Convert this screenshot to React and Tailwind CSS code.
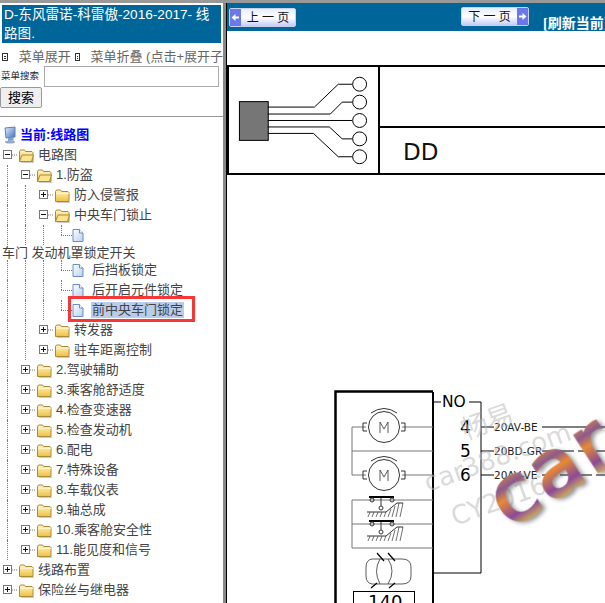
const Box = ({ open }) => (
  <svg width="18" height="20" viewBox="0 0 18 20" className="block shrink-0">
    <path d="M12 10H18" stroke="#777" strokeDasharray="1 1" />
    <rect x="3.5" y="5.5" width="8" height="8" fill="#fff" stroke="#777" />
    <path d="M5 9.5h5" stroke="#111" />
    {!open && <path d="M7.5 7v5" stroke="#111" />}
  </svg>
);

const Folder = ({ open }) => (
  <svg width="16" height="20" viewBox="0 0 16 20" className="block shrink-0">
    <defs>
      <linearGradient id="fg" x1="0" y1="0" x2="0" y2="1">
        <stop offset="0" stopColor="#fff6c8" />
        <stop offset="1" stopColor="#f0c040" />
      </linearGradient>
    </defs>
    <path d="M1.5 16.5V6.5l1-1.5h4l1 1.5h6.5l1 1v9z" fill="url(#fg)" stroke="#a88a3a" strokeWidth="1" />
    {open && <path d="M1.5 16.5l2.5-6.5h11.5l-2 6.5z" fill="#fbe48c" stroke="#a88a3a" strokeWidth="1" />}
    {!open && <path d="M2 8.5h13" stroke="#fff3c0" />}
    <path d="M3 17.5h13" stroke="#ccc" />
  </svg>
);

const Doc = () => (
  <svg width="12" height="20" viewBox="0 0 12 20" className="block shrink-0">
    <defs>
      <linearGradient id="dg" x1="0" y1="0" x2="1" y2="1">
        <stop offset="0" stopColor="#fff" />
        <stop offset="1" stopColor="#b8d0f0" />
      </linearGradient>
    </defs>
    <path d="M1 4.5h6.5l3.5 3.5v8.500H1z" fill="url(#dg)" stroke="#6c8cc0" />
    <path d="M7.500 4.500V8H11" fill="#fff" stroke="#6c8cc0" />
  </svg>
);

const Guides = ({ g }) =>
  g.map((on, i) => (
    <div key={i} className="w-[18px] h-full shrink-0">
      {on && <div className="ml-[7px] h-full border-l border-dotted border-[#777]" />}
    </div>
  ));

const Row = ({ g, open, label }) => (
  <div className="flex h-5 items-center">
    <Guides g={g} />
    <Box open={open} />
    <Folder open={open} />
    <span className="ml-1 whitespace-nowrap">{label}</span>
  </div>
);

const File = ({ label, active }) => (
  <div className="relative flex h-5 items-center">
    <Guides g={[true, true, true]} />
    <div className="w-[18px] h-full shrink-0 relative">
      <div className="ml-[7px] h-1/2 border-l border-dotted border-[#777]" />
      <div className="ml-[7px] mt-0 w-[11px] border-t border-dotted border-[#777]" />
    </div>
    <Doc />
    {label && (
      <span className={`ml-[7px] whitespace-nowrap px-px leading-4 ${active ? "bg-[#b9cdea]" : ""}`}>{label}</span>
    )}
    {active && <div className="absolute left-[68px] top-[-4px] w-[127px] h-[26px] border-[3px] border-[#f63737]" />}
  </div>
);

const Computer = () => (
  <svg width="15" height="18" viewBox="0 0 15 18" className="block shrink-0">
    <defs>
      <linearGradient id="cg" x1="0" y1="0" x2="1" y2="1">
        <stop offset="0" stopColor="#e8f0ff" />
        <stop offset="1" stopColor="#3f6fc0" />
      </linearGradient>
    </defs>
    <path d="M2 2l10-1v10l-9 1z" fill="url(#cg)" stroke="#5f7fb0" />
    <path d="M5 12l5-.5 1 3-6 .5z" fill="#7aa0d8" />
    <ellipse cx="7" cy="16" rx="5" ry="1.500" fill="#9ab" />
  </svg>
);

const PageBtn = ({ dir, w }) => (
  <div className={`flex h-[19px] ${w} items-center rounded-[2px] border border-[#c8d0f0] bg-gradient-to-b from-[#e8ecff] via-white to-[#c4ccf4] text-[12px] text-[#111] ${dir === "next" ? "flex-row-reverse" : ""}`}>
    <div className="flex h-full w-[11px] items-center justify-center bg-[#6a78e8]">
      <svg width="9" height="9" viewBox="0 0 9 9" className="block">
        <path d={dir === "next" ? "M1 3.500H4.500V1L8.500 4.500L4.500 8V5.500H1z" : "M8 3.500H4.500V1L.5 4.500L4.500 8V5.500H8z"} fill="#fff" />
      </svg>
    </div>
    <span className="flex-1 text-center leading-none whitespace-pre">{dir === "next" ? "下 一 页" : "上 一 页"}</span>
  </div>
);

const Diagram = () => (
  <svg width="378" height="428" viewBox="227 175 378 428" className="block" fontFamily="'DejaVu Sans',sans-serif">
    <defs>
      <linearGradient id="car" x1="0" y1="1" x2="0" y2="0">
        <stop offset=".12" stopColor="#e8d040" />
        <stop offset=".3" stopColor="#8a4a98" />
        <stop offset=".5" stopColor="#e88a34" />
        <stop offset=".62" stopColor="#8a5a90" />
        <stop offset=".78" stopColor="#e88a34" />
        <stop offset="1" stopColor="#8a8a98" />
      </linearGradient>
      <filter id="sh" x="-20%" y="-20%" width="140%" height="140%">
        <feGaussianBlur stdDeviation="2" />
      </filter>
      <filter id="soft" x="-5%" y="-5%" width="110%" height="110%">
        <feGaussianBlur stdDeviation=".7" />
      </filter>
    </defs>
    <g fill="none" stroke="#000">
      <path d="M335.500 603V391.500H433" strokeWidth="2.500" />
      <path d="M433 603V392" strokeWidth="2" />
      <path d="M433 402H441M469 402H481V573H433" strokeWidth="1" />
      <path d="M481 427H494M542 427H605" />
      <path d="M481 451H494M542 451H605" strokeDasharray="14 4" />
      <path d="M481 475H494M542 475H605" strokeDasharray="14 4" />
    </g>
    <g fill="none" stroke="#777">
      <path d="M433 427H402M366 427H352V475H366M402 475H433M352 451H433" />
      <path d="M433 500H352V548H433M352 524H433" />
    </g>
    <g fill="none" stroke="#333">
      <circle cx="384" cy="427" r="15.500" />
      <circle cx="384" cy="475" r="15.500" />
      <path d="M367 423h-4v8h4M401 423h4v8h-4M367 471h-4v8h4M401 471h4v8h-4" />
      <path d="M371 413q13-9 26 0M371 461q13-9 26 0" />
      <path d="M380 433v-11l4 7 4-7v11M380 481v-11l4 7 4-7v11" strokeWidth=".8" />
    </g>
    <g fill="none" stroke="#333">
      <path d="M369 497H394M369 521H394" stroke="#000" strokeWidth="2" />
      <path d="M381 498v8M381 522v8" />
      <circle cx="372" cy="500" r="2" /><circle cx="392" cy="500" r="2" />
      <circle cx="372" cy="524" r="2" /><circle cx="392" cy="524" r="2" />
      <circle cx="381" cy="508" r="2" /><circle cx="381" cy="532" r="2" />
      <path d="M367 512H386L397 503H403M367 536H386L397 527H403" />
      <path d="M368 517l2-5M372 517l2-5M376 517l2-5M380 517l2-5M384 517l2-5M388 517l3-8M392 517l3-11M396 517l3-14M400 517l3-14M368 541l2-5M372 541l2-5M376 541l2-5M380 541l2-5M384 541l2-5M388 541l3-8M392 541l3-11M396 541l3-14M400 541l3-14" strokeWidth=".7" />
    </g>
    <g fill="none" stroke="#333">
      <path d="M372 559h30q9 0 9 8v9q0 8-9 8h-30q-6-1-6-8v-9q0-7 6-8z" strokeWidth=".8" />
      <path d="M380 559q-7 12 0 25M388 559q8 12 0 25" strokeWidth=".8" />
      <path d="M377 553l7 8M388 553l7 8M377 583l-6 5M395 583l-6 5" stroke="#000" strokeWidth="1.200" />
      <rect x="353.500" y="591.500" width="61" height="30" stroke="#000" />
    </g>
    <text x="368" y="608" fontSize="18" fill="#000">140</text>
    <text x="442" y="407" fontSize="15.500" fill="#000">NO</text>
    <text x="460" y="433" fontSize="17" fill="#000">4</text>
    <text x="460" y="457" fontSize="17" fill="#000">5</text>
    <text x="460" y="481" fontSize="17" fill="#000">6</text>
    <text x="494" y="431" fontSize="10.500" fill="#222">20AV-BE</text>
    <text x="494" y="455" fontSize="10.500" fill="#222">20BD-GR</text>
    <text x="494" y="479" fontSize="10.500" fill="#222">20AV-VE</text>
    <g fill="#bbb" fillOpacity=".55">
      <text x="465" y="440" fontSize="27" transform="rotate(-20 465 440)" fontFamily="'Noto Sans CJK SC',sans-serif">畅易</text>
      <text x="428" y="492" fontSize="26" transform="rotate(-20 428 492)">car388.com</text>
      <text x="455" y="526" fontSize="26" transform="rotate(-20 455 526)">CY2016</text>
    </g>
    <g transform="rotate(-33 516 500)" fontSize="78" letterSpacing="4">
      <text x="497" y="524" fill="#555" fillOpacity=".55" stroke="#555" strokeOpacity=".5" strokeWidth="3" filter="url(#sh)">car</text>
      <text x="495" y="521" fill="url(#car)" stroke="url(#car)" strokeWidth="3" filter="url(#soft)">car</text>
    </g>
  </svg>
);

export default function App() {
  return (
    <div className="flex h-[603px] w-[605px] overflow-hidden bg-[#999] pt-[3px] [font-family:'Liberation_Sans','Noto_Sans_CJK_SC',sans-serif]">
      <aside className="h-[600px] w-[223px] shrink-0 overflow-hidden bg-white">
        <div className="mx-[2px] mt-[2px] h-[38px] bg-[#006699] px-[2px] text-[13.600px] leading-[19px] text-white">
          D-东风雷诺-科雷傲-2016-2017- 线路图.
        </div>
        <div className="mt-[5px] flex h-[18px] items-center whitespace-nowrap text-[13px] text-[#666]">
          <span className="ml-[2px] mr-[11px] flex h-[8px] w-[8px] flex-col justify-center gap-px border border-[#333] px-px"><i className="block h-px bg-[#333]" /><i className="block h-px bg-[#333]" /></span>
          <span>菜单展开</span>
          <span className="ml-1 mr-[10px] flex h-[8px] w-[8px] flex-col justify-center gap-px border border-[#333] px-px"><i className="block h-px bg-[#333]" /><i className="block h-px bg-[#333]" /></span>
          <span>菜单折叠 (点击+展开子</span>
        </div>
        <div className="flex h-[21px] items-center">
          <span className="ml-px w-[43px] text-[9.500px] text-[#222]">菜单搜索</span>
          <div className="h-[21px] w-[175px] border border-[#aaa] bg-white" />
        </div>
        <div className="flex h-[21px] w-[42px] items-center justify-center rounded-[2px] border border-[#999] bg-[#efefef] text-[13px] text-black">搜索</div>
        <div className="mt-[8px] border-t border-[#999]" />
        <div className="h-[8px]" />
        <div className="flex h-5 items-center pl-[3px] text-[13px] font-bold text-[#0000ff]">
          <Computer />
          <span className="ml-[2px]">当前:线路图</span>
        </div>
        <div className="text-[13px] text-[#444]">
          <Row g={[]} open label="电路图" />
          <Row g={[true]} open label="1.防盗" />
          <Row g={[true, true]} label="防入侵警报" />
          <Row g={[true, true]} open label="中央车门锁止" />
          <File />
          <div className="flex h-[15px] items-center whitespace-nowrap pl-[2px]">车门 发动机罩锁定开关</div>
          <File label="后挡板锁定" />
          <File label="后开启元件锁定" />
          <File label="前中央车门锁定" active />
          <Row g={[true, true]} label="转发器" />
          <Row g={[true, true]} label="驻车距离控制" />
          <Row g={[true]} label="2.驾驶辅助" />
          <Row g={[true]} label="3.乘客舱舒适度" />
          <Row g={[true]} label="4.检查变速器" />
          <Row g={[true]} label="5.检查发动机" />
          <Row g={[true]} label="6.配电" />
          <Row g={[true]} label="7.特殊设备" />
          <Row g={[true]} label="8.车载仪表" />
          <Row g={[true]} label="9.轴总成" />
          <Row g={[true]} label="10.乘客舱安全性" />
          <Row g={[true]} label="11.能见度和信号" />
          <Row g={[]} label="线路布置" />
          <Row g={[]} label="保险丝与继电器" />
        </div>
      </aside>
      <div className="w-[3px] shrink-0 bg-[#888]" />
      <div className="w-px shrink-0 bg-black" />
      <main className="min-w-0 flex-1 overflow-hidden bg-white">
        <div className="flex h-[28px] bg-[#006699]">
          <div className="ml-[2px] mt-[5px]"><PageBtn dir="prev" w="w-[67px]" /></div>
          <div className="ml-[165px] mt-[4px]"><PageBtn dir="next" w="w-[68px]" /></div>
          <div className="ml-[14px] mt-[10px] whitespace-nowrap text-[14px] font-bold text-white [font-family:'Liberation_Serif','Noto_Sans_CJK_SC',serif]">[刷新当前页]</div>
        </div>
        <div className="mt-[34px] flex h-[110px] w-[378px] border-y-2 border-l-2 border-black">
          <div className="flex w-[151px] shrink-0 items-center border-r-2 border-black">
            <svg width="150" height="106" viewBox="229 67 150 106" className="block">
              <rect x="239.500" y="101.500" width="29" height="39" fill="#767676" stroke="#000" />
              <g fill="none" stroke="#000" strokeWidth="1">
                <path d="M268 107H315L339 84H353M268 114H331L343 102H353M268 120.500H353M268 127H330L343 139H353M268 133.500H314L339 157H353" />
                <circle cx="360.500" cy="84" r="7" /><circle cx="360.500" cy="102" r="7" /><circle cx="360.500" cy="120.500" r="7" /><circle cx="360.500" cy="139" r="7" /><circle cx="360.500" cy="157" r="7" />
              </g>
            </svg>
          </div>
          <div className="flex flex-1 flex-col">
            <div className="h-[59px] border-b-2 border-black mb-[2px] box-content" />
            <div className="flex flex-1 items-center pl-[23px] pt-[2px] text-[23px] text-[#111] [font-family:'DejaVu_Sans',sans-serif]">DD</div>
          </div>
        </div>
        <Diagram />
      </main>
    </div>
  );
}
